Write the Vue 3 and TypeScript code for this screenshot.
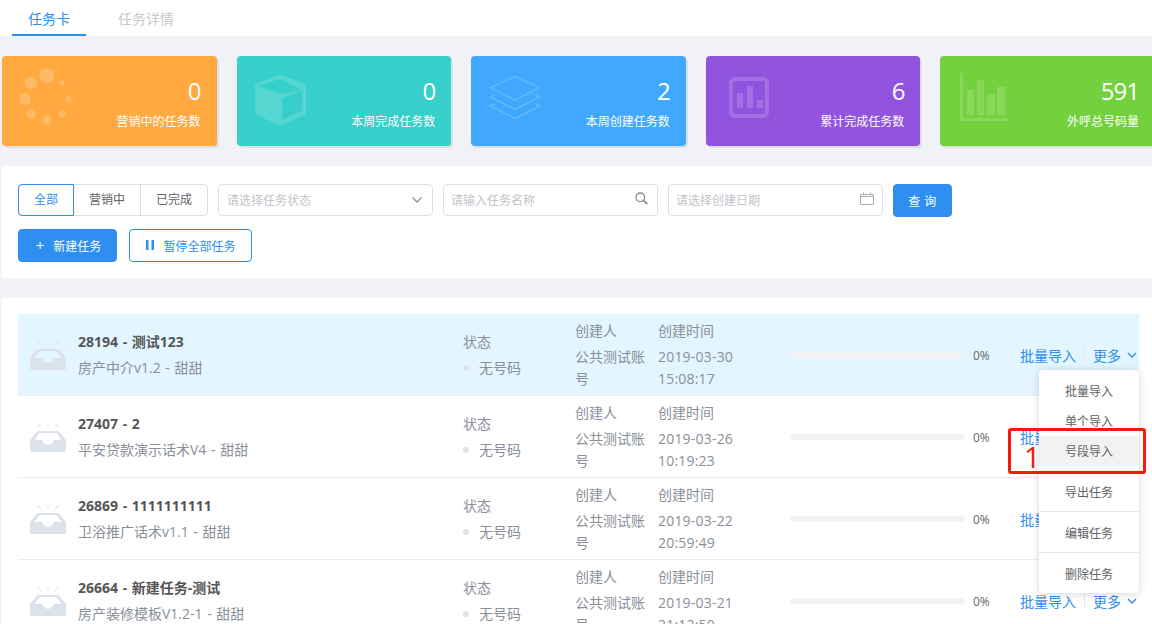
<script setup lang="ts">
interface Stat { value: string; label: string; color: string; kind: string }
interface Task { id: string; title: string; sub: string; date: string; time: string }

const stats: Stat[] = [
  { value: '0', label: '营销中的任务数', color: '#ffa940', kind: 'loader' },
  { value: '0', label: '本周完成任务数', color: '#36cfc9', kind: 'cube' },
  { value: '2', label: '本周创建任务数', color: '#40a9ff', kind: 'layers' },
  { value: '6', label: '累计完成任务数', color: '#9254de', kind: 'report' },
  { value: '591', label: '外呼总号码量', color: '#73d13d', kind: 'chart' },
]
const tasks: Task[] = [
  { id: '28194', title: '28194 - 测试123', sub: '房产中介v1.2 - 甜甜', date: '2019-03-30', time: '15:08:17' },
  { id: '27407', title: '27407 - 2', sub: '平安贷款演示话术V4 - 甜甜', date: '2019-03-26', time: '10:19:23' },
  { id: '26869', title: '26869 - 1111111111', sub: '卫浴推广话术v1.1 - 甜甜', date: '2019-03-22', time: '20:59:49' },
  { id: '26664', title: '26664 - 新建任务-测试', sub: '房产装修模板V1.2-1 - 甜甜', date: '2019-03-21', time: '21:12:50' },
]
const loaderDots = [
  [45, 19.5, 7.5], [29, 27, 6.5], [23, 43, 6], [29, 58, 5],
  [45, 64, 4.5], [60, 58, 3.5], [66.5, 43, 3], [60, 27, 2.5],
]
</script>

<template>
  <div class="page">
    <div class="tabs">
      <div class="tab active">任务卡</div>
      <div class="tab">任务详情</div>
    </div>

    <div class="stats">
      <div v-for="s in stats" :key="s.label" class="stat" :style="{ background: s.color }">
        <svg class="stat-icon" width="80" height="90" viewBox="0 0 80 90">
          <g v-if="s.kind === 'loader'" fill="#fff" fill-opacity=".2">
            <circle v-for="(d, i) in loaderDots" :key="i" :cx="d[0]" :cy="d[1]" :r="d[2]" />
          </g>
          <g v-else-if="s.kind === 'cube'" transform="translate(18 18)" fill="#fff" fill-opacity=".16">
            <path fill-rule="evenodd" d="M25 0.500 51 10v30L25 52 0 40V10ZM3.300 12.300 26 20.300 47.300 16.300 25 4.700ZM27.300 23.700V46.300L47.300 36.300V17Z" />
          </g>
          <g v-else-if="s.kind === 'layers'" transform="translate(19 20)" fill="none" stroke="#fff" stroke-opacity=".18" stroke-width="1.600">
            <path d="M25 .500 49.500 11.700 25 24 .500 11.700Z" />
            <path d="M5 18.500 .500 21 25 33.300 49.500 21 45 18.500" />
            <path d="M5 27.500 .500 30 25 42.500 49.500 30 45 27.500" />
          </g>
          <g v-else-if="s.kind === 'report'" transform="translate(23 21)" fill="#fff" fill-opacity=".16">
            <rect x="2" y="2" width="36" height="37" rx="4" fill="none" stroke="#fff" stroke-opacity=".16" stroke-width="4" />
            <rect x="8" y="16" width="6" height="15" />
            <rect x="18" y="9" width="6" height="22" />
            <rect x="28" y="23" width="6" height="8" />
          </g>
          <g v-else transform="translate(20 17)" fill="#fff" fill-opacity=".16">
            <path d="M0 0h3v45h45v3H0Z" />
            <rect x="7" y="17" width="7" height="25" />
            <rect x="17" y="7" width="7" height="35" />
            <rect x="27" y="21" width="8" height="21" />
            <rect x="37" y="14" width="8" height="28" />
          </g>
        </svg>
        <div class="stat-text">
          <div class="stat-value">{{ s.value }}</div>
          <div class="stat-label">{{ s.label }}</div>
        </div>
      </div>
    </div>

    <div class="filter panel">
      <div class="filter-row">
        <div class="segment">
          <div class="seg on">全部</div>
          <div class="seg">营销中</div>
          <div class="seg">已完成</div>
        </div>
        <div class="field first">
          <span>请选择任务状态</span>
          <svg width="12" height="12" viewBox="0 0 12 12" fill="none" stroke="#8c93a0" stroke-width="1.400"><path d="M1.500 3.500 6 8 10.500 3.500" /></svg>
        </div>
        <div class="field">
          <span>请输入任务名称</span>
          <svg class="raised" width="14" height="14" viewBox="0 0 14 14" fill="none" stroke="#858c99" stroke-width="1.300"><circle cx="5.300" cy="5.300" r="4.300" /><path d="m8.400 8.400 3.800 3.800" stroke-width="1.800" /></svg>
        </div>
        <div class="field">
          <span>请选择创建日期</span>
          <svg class="raised" width="14" height="14" viewBox="0 0 14 14" fill="none" stroke="#a6abb5" stroke-width="1"><path d="M.500 2.500h13v10H.500ZM.500 4.500h13M3.500 .5v2M10.500 .5v2" /></svg>
        </div>
        <button class="btn primary query">查 询</button>
      </div>
      <div class="filter-row second">
        <button class="btn primary create"><span class="plus">+</span>新建任务</button>
        <button class="btn outline">
          <svg class="pause" width="8" height="10" viewBox="0 0 8 10" fill="#2e8ff0"><rect x="0" width="2.500" height="10" /><rect x="5.500" width="2.500" height="10" /></svg>
          暂停全部任务
        </button>
      </div>
    </div>

    <div class="list panel">
      <div class="rows">
        <div v-for="(t, i) in tasks" :key="t.id" class="row" :class="{ hot: i === 0 }">
          <svg width="36" height="30" viewBox="0 0 36 30">
            <path fill="#dce2ea" fill-opacity=".75" d="M17.400 0h1.200v5.500h-1.200ZM6.800 1.600l.9-.9 3.600 3.900-.9.900ZM28.300.7l.9.9-3.600 3.900-.9-.9Z" />
            <path fill="#dce2ea" fill-rule="evenodd" d="M7.500 9h21L36 18v10a2 2 0 0 1-2 2H2a2 2 0 0 1-2-2V18Zm-3.200 9h8c.7 3 2.900 4.800 5.700 4.800s5-1.800 5.700-4.800h8l-5.300-7H9.600Z" />
          </svg>
          <div class="info">
            <div class="title">{{ t.title }}</div>
            <div class="sub">{{ t.sub }}</div>
          </div>
          <div class="info status">
            <div class="muted">状态</div>
            <div class="state"><i class="dot"></i>无号码</div>
          </div>
          <div class="stack creator">
            <div class="head">创建人</div>
            <div>公共测试账号</div>
          </div>
          <div class="stack when">
            <div class="head">创建时间</div>
            <div>{{ t.date }}</div>
            <div>{{ t.time }}</div>
          </div>
          <div class="progress">
            <div class="track"></div>
            <span class="pct">0%</span>
          </div>
          <div class="actions">
            <a>批量导入</a>
            <i class="sep"></i>
            <a>更多</a>
            <svg width="10" height="10" viewBox="0 0 10 10" fill="none" stroke="#2e8ff0" stroke-width="1.300"><path d="M1 3l4 4 4-4" /></svg>
          </div>
        </div>

        <div class="menu">
          <div class="item">批量导入</div>
          <div class="item">单个导入</div>
          <div class="item current">号段导入</div>
          <div class="rule"></div>
          <div class="item">导出任务</div>
          <div class="rule"></div>
          <div class="item">编辑任务</div>
          <div class="rule"></div>
          <div class="item">删除任务</div>
        </div>
      </div>
    </div>

    <div class="mark"></div>
    <div class="mark-num">1</div>
  </div>
</template>

<style scoped>
.page {
  position: relative;
  width: 1152px;
  height: 624px;
  overflow: hidden;
  background: #f0f2f5;
  font-family: "Open Sans", "Noto Sans CJK SC", sans-serif;
  font-size: 14px;
  color: #606266;
}
.tabs {
  display: flex;
  height: 36px;
  padding-left: 12px;
  background: #fff;
  box-sizing: border-box;
}
.tab {
  height: 36px;
  box-sizing: border-box;
  padding: 0 16px;
  margin-right: 16px;
  line-height: 38px;
  color: #c8c9cc;
}
.tab.active {
  color: #2e8ff0;
  border-bottom: 2px solid #2e8ff0;
}
.stats {
  display: grid;
  grid-template-columns: repeat(5, 214.6px);
  gap: 20px;
  width: 1153px;
  margin: 20px 0 20px 2px;
}
.stat {
  display: flex;
  height: 90px;
  border-radius: 4px;
  box-shadow: 2px 2px 0 #dcdfe6;
  color: #fff;
}
.stat-icon {
  flex: none;
}
.stat-text {
  margin-left: auto;
  padding: 19px 16px 0 0;
  text-align: right;
}
.stat-value {
  font-size: 24px;
  line-height: 32px;
  letter-spacing: -1px;
}
.stat-label {
  margin-top: 5px;
  font-size: 12px;
  line-height: 20px;
}
.panel {
  width: 1153px;
  margin-left: 2px;
  background: #fff;
  box-sizing: border-box;
  padding: 16px;
}
.filter {
  height: 112px;
  padding-top: 18px;
  margin-bottom: 20px;
}
.filter-row {
  display: flex;
  gap: 10px;
}
.filter-row.second {
  gap: 12px;
  margin-top: 12px;
}
.segment {
  display: flex;
  height: 32px;
  box-sizing: border-box;
  border: 1px solid #dcdfe6;
  border-radius: 4px;
  font-size: 12px;
  width: 190px;
}
.seg {
  flex: none;
  width: 67px;
  border-right: 1px solid #dcdfe6;
  text-align: center;
  line-height: 30px;
  box-sizing: border-box;
}
.seg:last-child {
  width: 66px;
  border-right: 0;
}
.seg.on {
  width: 56px;
  height: 32px;
  margin: -1px 0 -1px -1px;
  border: 1px solid #2e8ff0;
  border-radius: 4px 0 0 4px;
  color: #2e8ff0;
}
.field {
  display: flex;
  align-items: center;
  justify-content: space-between;
  width: 215px;
  height: 32px;
  box-sizing: border-box;
  padding: 0 8px 0 7px;
  border: 1px solid #dcdfe6;
  border-radius: 4px;
  font-size: 12px;
  color: #c0c4cc;
}
.field.first {
  padding-left: 8px;
  padding-right: 9px;
}
.raised {
  margin-top: -3px;
}
.btn {
  display: flex;
  align-items: center;
  justify-content: center;
  box-sizing: border-box;
  padding: 0;
  border-radius: 4px;
  border: 1px solid #2e8ff0;
  font: inherit;
  font-size: 12px;
}
.primary {
  background: #2e8ff0;
  color: #fff;
}
.query {
  width: 59px;
  height: 33px;
  letter-spacing: .5px;
}
.create {
  width: 99px;
  height: 33px;
  padding-left: 2px;
}
.plus {
  margin-right: 9px;
  font-size: 15px;
  line-height: 1;
}
.outline {
  width: 123px;
  height: 33px;
  gap: 9px;
  padding-left: 1px;
  background: #fff;
  color: #2e8ff0;
}
.pause {
  margin-top: -1px;
}
.list {
  height: 340px;
}
.rows {
  position: relative;
}
.row {
  display: grid;
  grid-template-columns: 48px 385px 112px 83px 132px 230px 1fr;
  align-items: center;
  height: 82px;
  box-sizing: border-box;
  padding-left: 12px;
  border-bottom: 1px solid #e9ebef;
  background: #fff;
}
.row.hot {
  background: #e3f5ff;
}
.info {
  display: flex;
  flex-direction: column;
  gap: 8px;
  line-height: 18px;
}
.title {
  font-weight: 700;
  color: #555;
  word-spacing: 1px;
}
.sub {
  word-spacing: 1px;
}
.sub,
.muted,
.state,
.stack {
  color: #8a8f99;
}
.state {
  display: flex;
  align-items: center;
}
.dot {
  width: 6px;
  height: 6px;
  margin: 0 10px 0 0;
  border-radius: 50%;
  background: #dfe3e9;
}
.stack {
  align-self: start;
  padding-top: 6px;
  line-height: 22px;
}
.head {
  margin-bottom: 4px;
}
.creator {
  width: 75px;
}
.when {
  letter-spacing: .2px;
}
.when .head {
  letter-spacing: 0;
}
.progress {
  display: flex;
  align-items: center;
}
.track {
  width: 175px;
  height: 6px;
  border-radius: 3px;
  background: #f1f2f4;
}
.pct {
  margin: 2px 0 0 8px;
  font-size: 12px;
  color: #666;
}
.actions {
  display: flex;
  align-items: center;
  color: #2e8ff0;
  white-space: nowrap;
}
.sep {
  width: 1px;
  height: 14px;
  margin: 0 8px;
  background: #e4e7ed;
}
.actions svg {
  margin-left: 6px;
}
.menu {
  position: absolute;
  top: 56px;
  right: 0;
  width: 100px;
  padding: 6px 0 4px;
  background: #fff;
  border-radius: 4px;
  box-shadow: 0 1px 8px rgba(0, 0, 0, .16);
  font-size: 12px;
  color: #606266;
}
.item {
  height: 30px;
  line-height: 31px;
  text-align: center;
}
.item.current {
  background: #f2f2f2;
}
.rule {
  height: 1px;
  margin: 4px 0 6px;
  background: #e8e8e8;
}
.mark {
  position: absolute;
  left: 1008px;
  top: 428px;
  width: 138px;
  height: 46px;
  box-sizing: border-box;
  border: 3px solid #f5190f;
  border-radius: 3px;
}
.mark-num {
  position: absolute;
  left: 1024px;
  top: 441px;
  font-size: 29px;
  line-height: 32px;
  color: #f5190f;
}
</style>
